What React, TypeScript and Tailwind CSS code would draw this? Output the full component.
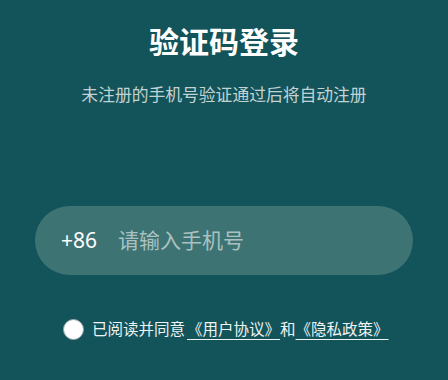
export default function App() {
  return (
    <div
      className="w-[448px] h-[380px] overflow-hidden bg-[#13535a] flex flex-col items-center"
      style={{ fontFamily: '"Noto Sans", "Noto Sans CJK SC", sans-serif' }}
    >
      <h1 className="mt-[22px] text-[30px] leading-[40px] font-bold text-white">验证码登录</h1>
      <p className="mt-[21px] text-[16.8px] leading-[24px] text-[#c3d3d3]">未注册的手机号验证通过后将自动注册</p>

      <div className="mt-[99px] w-[378px] h-[69px] rounded-full bg-[#3e7373] flex items-center pl-[26px]">
        <span className="text-[21px] text-white">+86</span>
        <input
          placeholder="请输入手机号"
          className="ml-[21px] flex-1 bg-transparent outline-none text-[21px] text-white placeholder:text-[#a9c1c1]"
        />
      </div>

      <div className="mt-[43px] w-full flex items-center pl-[63px] text-[15.5px] text-[#eef4f4]">
        <span className="w-[21px] h-[21px] rounded-full bg-white border border-[#9aa8a8] shrink-0" />
        <span className="ml-[8px]">已阅读并同意</span>
        <a className="underline underline-offset-[4px] ml-[2px]">《用户协议》</a>
        <span>和</span>
        <a className="underline underline-offset-[4px]">《隐私政策》</a>
      </div>
    </div>
  );
}
